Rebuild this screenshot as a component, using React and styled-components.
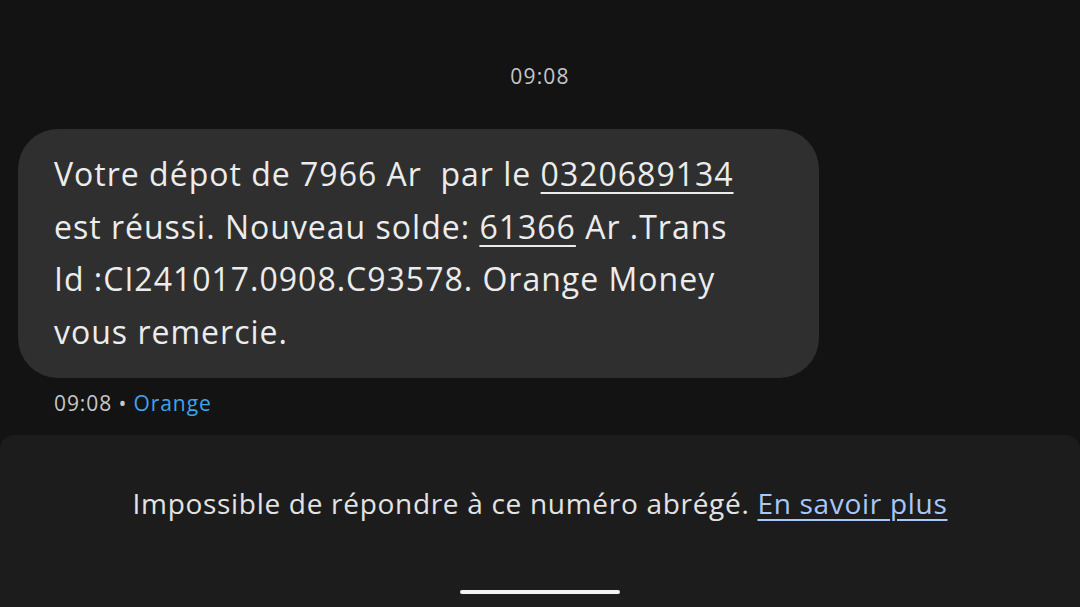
import React from 'react'
import styled, { createGlobalStyle } from 'styled-components'

const GlobalStyle = createGlobalStyle`
  html, body {
    margin: 0;
    padding: 0;
    background: #131313;
  }
  body {
    font-family: 'Open Sans', 'Noto Sans', sans-serif;
    color: #e6e6e6;
  }
`

const Screen = styled.div`
  width: 1080px;
  height: 607px;
  background: #131313;
  display: flex;
  flex-direction: column;
  overflow: hidden;
`

const Thread = styled.div`
  flex: 1;
  display: flex;
  flex-direction: column;
  padding: 62px 0 0 18px;
`

const Stamp = styled.div`
  align-self: center;
  margin-left: -18px;
  font-size: 21px;
  line-height: 28px;
  letter-spacing: 1.2px;
  color: #c7c7c7;
  margin-bottom: 39px;
`

const Bubble = styled.div`
  width: 801px;
  box-sizing: border-box;
  background: #2f2f2f;
  border-radius: 40px;
  padding: 19px 36px 20px;
  font-size: 32px;
  line-height: 52.5px;
  letter-spacing: 1px;
  color: #ececec;
`

const Line = styled.div`
  white-space: pre;
`

const Num = styled.span`
  text-decoration: underline;
  text-decoration-thickness: 2px;
  text-underline-offset: 6px;
`

const Meta = styled.div`
  margin: 11px 0 0 36px;
  font-size: 21px;
  line-height: 28px;
  letter-spacing: 0.9px;
  color: #c7c7c7;
  span {
    color: #3fa4ea;
  }
`

const Panel = styled.div`
  height: 172px;
  background: #1c1c1c;
  border-radius: 14px 14px 0 0;
  display: flex;
  flex-direction: column;
  align-items: center;
`

const Notice = styled.div`
  margin-top: 50px;
  font-size: 28px;
  line-height: 36px;
  letter-spacing: 0.7px;
  color: #e3e3e3;
  a {
    color: #a8c7fa;
    text-decoration: underline;
    text-decoration-thickness: 2px;
    text-underline-offset: 5px;
  }
`

const HomeBar = styled.div`
  margin-top: auto;
  margin-bottom: 13px;
  width: 160px;
  height: 4px;
  border-radius: 2px;
  background: #f2f2f2;
`

export default function App() {
  return (
    <Screen>
      <GlobalStyle />
      <Thread>
        <Stamp>09:08</Stamp>
        <Bubble>
          <Line>
            Votre dépot de 7966 Ar  par le <Num>0320689134</Num>
          </Line>
          <Line>
            est réussi. Nouveau solde: <Num>61366</Num> Ar .Trans
          </Line>
          <Line>Id :CI241017.0908.C93578. Orange Money</Line>
          <Line>vous remercie.</Line>
        </Bubble>
        <Meta>
          09:08 • <span>Orange</span>
        </Meta>
      </Thread>
      <Panel>
        <Notice>
          Impossible de répondre à ce numéro abrégé. <a>En savoir plus</a>
        </Notice>
        <HomeBar />
      </Panel>
    </Screen>
  )
}
